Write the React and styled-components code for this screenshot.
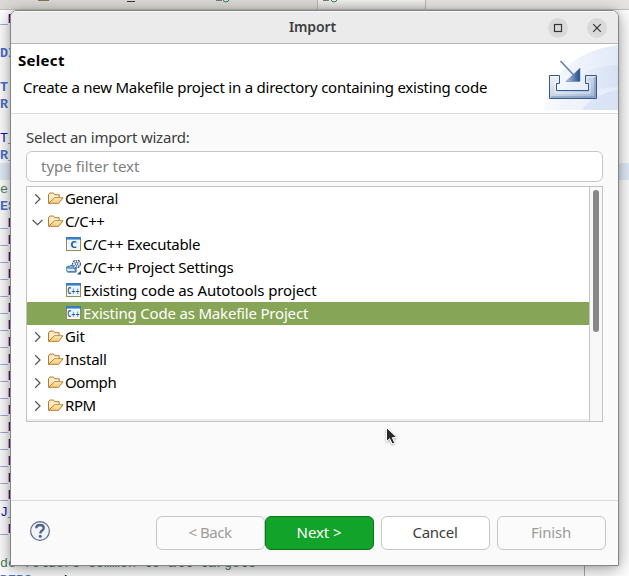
import React from 'react';
import styled, { createGlobalStyle } from 'styled-components';

const GlobalStyle = createGlobalStyle`
  * { box-sizing: border-box; }
  html, body { margin: 0; padding: 0; overflow: hidden; }
  body { font: 15px/20px "Noto Sans", sans-serif; color: #000; }
`;

const Desktop = styled.div`
  position: relative;
  width: 629px;
  height: 576px;
  overflow: hidden;
  background: #fff;
`;

const TabStrip = styled.div`
  display: flex;
  height: 10px;
  border-bottom: 1px solid #c4c1bd;
  background: #e6e5e3;
`;

const EditorTab = styled.div`
  display: flex;
  justify-content: flex-end;
  width: ${p => p.$width}px;
  padding-right: ${p => p.$inset}px;
  border-right: 1px solid #b9b6b2;
  background: ${p => (p.$active ? 'linear-gradient(#f1f1f0, #dddcdb)' : '#dcdad7')};
`;

const Code = styled.div`
  display: flex;
  flex-direction: column;
  font: 13.33px/19px "Liberation Mono", monospace;
`;

const codeColors = {
  name: '#4a70cf',
  target: '#1010b0',
  comment: '#3f7f5f',
};

const CodeLine = styled.div`
  flex: none;
  height: 17px;
  white-space: pre;
  color: ${p => codeColors[p.$kind] || '#5566d8'};
  font-weight: ${p => (p.$kind === 'name' ? 700 : 400)};
  background: ${p => (p.$current ? '#e3edfa' : 'transparent')};
`;

const Macro = styled.span`
  color: #3b1088;
  font-weight: 700;
`;

const Plain = styled.span`
  color: #000;
`;

const Margin = styled.div`
  position: absolute;
  left: 584px;
  top: 10px;
  bottom: 0;
  width: 1px;
  background: #a8a8ae;
`;

const Dialog = styled.section`
  position: absolute;
  left: 10px;
  top: 10px;
  width: 609px;
  height: 556px;
  display: flex;
  flex-direction: column;
  overflow: hidden;
  border: 1px solid #858585;
  border-radius: 7px 7px 0 0;
  background: #fafafa;
`;

const DialogShadow = styled.div`
  position: absolute;
  left: 10px;
  top: 10px;
  width: 609px;
  height: 556px;
  border-radius: 7px 7px 0 0;
  box-shadow: 0 3px 18px rgba(0, 0, 0, 0.4), 0 0 4px rgba(0, 0, 0, 0.1);
`;

const Label = styled.span`
  white-space: pre;
  letter-spacing: ${p => p.$track || 0}px;
`;

const TitleBar = styled.header`
  display: grid;
  grid-template-columns: 1fr auto 1fr;
  align-items: center;
  flex: none;
  height: 33px;
  border-top: 1px solid #f8f8f8;
  border-bottom: 1px solid #b6b6b6;
  background: #ebebeb;
`;

const WindowTitle = styled.h1`
  grid-column: 2;
  margin: 0;
  padding: 0 4px 2px 0;
  font-size: 14px;
  line-height: 20px;
  font-weight: 600;
  color: #3d3d3d;
  letter-spacing: -0.1px;
`;

const WindowButtons = styled.div`
  display: flex;
  justify-content: flex-end;
  gap: 19px;
  padding: 1px 11px 0 0;
`;

const RoundButton = styled.button`
  display: flex;
  align-items: center;
  justify-content: center;
  width: 20px;
  height: 20px;
  padding: 0;
  border: 0;
  border-radius: 50%;
  background: #dadada;
`;

const Banner = styled.div`
  display: flex;
  justify-content: space-between;
  flex: none;
  height: 70px;
  border-bottom: 1px solid #dedede;
  background: #fff;
`;

const BannerText = styled.div`
  display: flex;
  flex-direction: column;
  gap: 7px;
  padding: 6px 0 0 7px;
`;

const StepTitle = styled.strong`
  line-height: 20px;
  letter-spacing: 0.3px;
`;

const StepInfo = styled.div`
  padding-left: 5px;
`;

const Body = styled.main`
  display: flex;
  flex-direction: column;
  flex: 1;
  padding: 13px 15px 0;
`;

const FieldLabel = styled.label`
  color: #3d3d3d;
  height: 24px;
`;

const Filter = styled.div`
  display: flex;
  align-items: center;
  height: 31px;
  margin-bottom: 4px;
  padding: 0 0 2px 14px;
  border: 1px solid #c6c6c6;
  border-radius: 6px;
  background: #fff;
  color: #808080;
`;

const Tree = styled.div`
  display: flex;
  height: 236px;
  border: 1px solid #c3c3c3;
  background: #fff;
`;

const Rows = styled.div`
  flex: 1;
  border-bottom: 2px solid #eeeeee;
`;

const Row = styled.div`
  display: flex;
  align-items: center;
  height: 23px;
  padding-left: ${p => (p.$child ? 39 : 3)}px;
  color: ${p => (p.$selected ? '#fff' : '#000')};
  background: ${p => (p.$selected ? '#87a556' : 'transparent')};
`;

const RowLabel = styled(Label)`
  margin-left: 1px;
  padding-bottom: 2px;
`;

const ScrollTrack = styled.div`
  width: 13px;
  padding: 3px 0 0 3px;
  border-left: 1px solid #c6c6c6;
  background: #f8f8f8;
`;

const ScrollThumb = styled.div`
  width: 6px;
  height: 142px;
  border-radius: 3px;
  background: #888;
`;

const Footer = styled.footer`
  display: flex;
  align-items: flex-start;
  flex: none;
  height: 65px;
  padding: 15px 12px 0 18px;
  border-top: 1px solid #dadada;
`;

const HelpButton = styled.button`
  display: flex;
  margin: 4px auto 0 0;
  padding: 0;
  border: 0;
  background: none;
`;

const PushButton = styled.button`
  width: 109px;
  height: 34px;
  margin-left: ${p => p.$gap || 0}px;
  padding: 0 1px 2px 0;
  border: 1px solid ${p => (p.$primary ? '#0c751b' : '#c6c6c6')};
  border-radius: 6px;
  font: 15px/20px "Noto Sans", sans-serif;
  color: ${p => (p.$primary ? '#fff' : p.disabled ? '#9c9c9c' : '#3d3d3d')};
  background: ${p => (p.$primary ? '#12a32a' : p.disabled ? '#fbfbfb' : '#fff')};
`;

const Pointer = styled.svg`
  position: absolute;
  left: 384px;
  top: 425px;
  filter: drop-shadow(0 1px 1px rgba(0, 0, 0, 0.3));
`;

const Chevron = ({ open }) => (
  <svg width="18" height="18" viewBox="0 0 18 18" fill="none" stroke="#555" strokeWidth="1.25">
    <path d={open ? 'M2.6 7l4.9 4.6L12.4 7' : 'M5.2 4.3L10 9l-4.8 4.7'} />
  </svg>
);

const Folder = () => (
  <svg width="16" height="16" viewBox="0.5 0.5 16 16" strokeLinejoin="round">
    <path d="M1 12.5V4.2l1.4-1.7H6l1.3 1.7h4.4v3" fill="#fbe8bb" stroke="#b57a35" />
    <path d="M2.7 5.8h7.8" stroke="#fff6dc" />
    <path d="M1 12.8L5.6 8.7l1.3-1.4h8.6l-4.3 5.5z" fill="#fbd78b" stroke="#b57a35" />
    <path d="M6.8 8.4h6.9" stroke="#fff0c5" />
  </svg>
);

const SourceWindow = ({ text }) => (
  <svg width="16" height="16" viewBox="0 1 16 16">
    <rect x=".5" y="1.5" width="14" height="13" fill="#eaf7fe" stroke="#a08a52" />
    <rect x="0" y="1" width="15" height="3" fill="#3c7bc0" />
    <path d="M1 3.5h13" stroke="#80b5e6" />
    <text
      x="7.6"
      y="12"
      textAnchor="middle"
      fontFamily="DejaVu Sans, sans-serif"
      fontWeight="700"
      fontSize={text === 'C' ? 8.5 : 8}
      textLength={text === 'C' ? undefined : 12}
      lengthAdjust="spacingAndGlyphs"
      fill="#1d5685"
    >
      {text}
    </text>
  </svg>
);

const ProjectSettings = () => (
  <svg width="16" height="16" viewBox="0.5 1 16 16">
    <path d="M1 8.3l1-1h2l1-1h2l1 1.5h2.5V13H2V9z" fill="#8bb8e3" stroke="#2d659f" />
    <path d="M0 9.1h9l1.3 3.6H1.8z" fill="#d8ebfa" stroke="#3b74ad" />
    <circle cx="11" cy="4.9" r="3.9" fill="#e8eff7" stroke="#345b87" strokeWidth="1.2" strokeDasharray="2 .8" />
    <path d="M8 2.3l6 5M14 2.3L8 7.3M11 1.3v7" stroke="#58799f" strokeWidth=".8" />
    <circle cx="11" cy="4.9" r="1.3" fill="#fff" stroke="#345b87" strokeWidth=".8" />
    <path d="M15.5 11.5v4h-4z" fill="#204f85" />
  </svg>
);

const icons = {
  folder: <Folder />,
  c: <SourceWindow text="C" />,
  cpp: <SourceWindow text="C++" />,
  settings: <ProjectSettings />,
};

const ImportArt = () => (
  <svg width="74" height="67" viewBox="0 0 74 67">
    <defs>
      <linearGradient id="glow" x1="0" x2="1" y1="0" y2="0">
        <stop offset="0" stopColor="#f7f9fe" />
        <stop offset="1" stopColor="#dce5f6" />
      </linearGradient>
      <linearGradient id="sweep" x1="0" x2="1" y1="0" y2="0">
        <stop offset="0" stopColor="#f3f6fd" stopOpacity=".4" />
        <stop offset="1" stopColor="#c8d7f1" />
      </linearGradient>
      <linearGradient id="tray" x1="0" x2="1" y1="0" y2="1">
        <stop offset="0" stopColor="#f0f4fa" />
        <stop offset="1" stopColor="#9fb4d4" />
      </linearGradient>
      <linearGradient id="head" x1="0" x2="1" y1="0" y2="0">
        <stop offset="0" stopColor="#b5c7e0" />
        <stop offset="1" stopColor="#224a8a" />
      </linearGradient>
    </defs>
    <path d="M0 66C5 35 27 7 74 1v65z" fill="url(#glow)" opacity=".8" />
    <path d="M15 50C28 32 48 22 74 21v22C50 44 31 52 20 66H8z" fill="url(#sweep)" opacity=".5" />
    <path d="M38 66c6-9 18-17 36-20v20z" fill="#cddaf3" opacity=".5" />
    <g transform="translate(-1 0)">
      <path d="M6.5 31.5h10v8h-3v7h32v-7h-3v-8h11v23h-47z" fill="url(#tray)" stroke="#38598f" />
      <path d="M8 33h7v5h-3v11h35V38h-3v-5h8" fill="none" stroke="#fff" strokeOpacity=".6" />
      <path d="M8 53h44V33" fill="none" stroke="#6e8bb8" />
      <path d="M17.5 17l15 16" stroke="#5e81b2" strokeWidth="1.7" />
      <path d="M37 24v13.5H23z" fill="url(#head)" stroke="#6685b3" strokeWidth=".6" />
    </g>
  </svg>
);

const tree = [
  { label: 'General', icon: 'folder', track: -0.33 },
  { label: 'C/C++', icon: 'folder', track: -0.45, open: true },
  { label: 'C/C++ Executable', icon: 'c', track: -0.3, child: true },
  { label: 'C/C++ Project Settings', icon: 'settings', track: -0.23, child: true },
  { label: 'Existing code as Autotools project', icon: 'cpp', track: -0.115, child: true },
  { label: 'Existing Code as Makefile Project', icon: 'cpp', track: -0.19, child: true, selected: true },
  { label: 'Git', icon: 'folder', track: -0.2 },
  { label: 'Install', icon: 'folder', track: -0.2 },
  { label: 'Oomph', icon: 'folder', track: -0.4 },
  { label: 'RPM', icon: 'folder', track: -0.4 },
];

const macro = { kind: 'macro', text: '_' };
const blank = { text: ' ' };
const source = [
  macro, blank,
  { kind: 'name', text: 'DIR' }, blank,
  { kind: 'name', text: 'T' },
  { kind: 'name', text: 'R' }, blank,
  { kind: 'target', text: 'T_' },
  { kind: 'name', text: 'R_' },
  { text: ' ', current: true },
  { kind: 'comment', text: 'e' },
  { kind: 'name', text: 'ES' },
  ...Array(17).fill(macro),
  { kind: 'target', text: 'J_' },
  macro, blank,
  { kind: 'comment', text: 'de folders common to all targets' },
  { kind: 'name', text: 'DERS += ', tail: '\\' },
];

export default function App() {
  return (
    <Desktop>
      <GlobalStyle />
      <TabStrip>
        <EditorTab $width={318} $inset={86}>
          <svg width="231" height="9" fill="none">
            <path d="M38 0h11" stroke="#847548" strokeWidth="2" />
            <path d="M127 1.5h8" stroke="#333" />
            <path d="M216 0h6" stroke="#777" strokeWidth="2" />
            <circle cx="226" cy="-1" r="3" stroke="#358564" />
          </svg>
        </EditorTab>
        <EditorTab $width={108} $inset={84} $active>
          <svg width="20" height="9" fill="none">
            <path d="M2 0h6" stroke="#777" strokeWidth="2" />
            <circle cx="13" cy="-1" r="3" stroke="#358564" />
          </svg>
        </EditorTab>
      </TabStrip>
      <Code>
        {source.map((line, i) => (
          <CodeLine key={i} $kind={line.kind} $current={line.current}>
            {line.text}
            {line.kind === 'macro' && <Macro>M</Macro>}
            {line.tail && <Plain>{line.tail}</Plain>}
          </CodeLine>
        ))}
      </Code>
      <Margin />
      <DialogShadow />
      <Dialog>
        <TitleBar>
          <WindowTitle>Import</WindowTitle>
          <WindowButtons>
            <RoundButton aria-label="Maximize">
              <svg width="20" height="20" fill="none" stroke="#333" strokeWidth="1.2">
                <rect x="6.5" y="6.5" width="7" height="7" />
              </svg>
            </RoundButton>
            <RoundButton aria-label="Close">
              <svg width="20" height="20" fill="none" stroke="#333" strokeWidth="1.2">
                <path d="M6.2 6.2l7.6 7.6M13.8 6.2l-7.6 7.6" />
              </svg>
            </RoundButton>
          </WindowButtons>
        </TitleBar>
        <Banner>
          <BannerText>
            <StepTitle>Select</StepTitle>
            <StepInfo>
              <Label $track={-0.23}>Create a new Makefile project in a directory containing existing code</Label>
            </StepInfo>
          </BannerText>
          <ImportArt />
        </Banner>
        <Body>
          <FieldLabel>
            <Label $track={-0.23}>Select an import wizard:</Label>
          </FieldLabel>
          <Filter>
            <Label>type filter text</Label>
          </Filter>
          <Tree>
            <Rows>
              {tree.map(item => (
                <Row key={item.label} $child={item.child} $selected={item.selected}>
                  {!item.child && <Chevron open={item.open} />}
                  {icons[item.icon]}
                  <RowLabel $track={item.track}>{item.label}</RowLabel>
                </Row>
              ))}
            </Rows>
            <ScrollTrack>
              <ScrollThumb />
            </ScrollTrack>
          </Tree>
        </Body>
        <Footer>
          <HelpButton aria-label="Help">
            <svg width="22" height="22" viewBox="0 0 22 22">
              <circle cx="11" cy="11" r="9.4" fill="#f1f3f6" stroke="#5a6d8c" strokeWidth="1.2" />
              <path d="M7.3 8.2c0-2.2 1.6-3.2 3.7-3.2s3.8 1 3.8 3c0 2.6-3.5 2.5-3.5 5.4" fill="none" stroke="#4f6488" strokeWidth="2.3" />
              <circle cx="11.2" cy="16.3" r="1.5" fill="#4f6488" />
            </svg>
          </HelpButton>
          <PushButton disabled><Label $track={-0.45}>{'< Back'}</Label></PushButton>
          <PushButton $primary><Label $track={-0.1}>{'Next >'}</Label></PushButton>
          <PushButton $gap={7}><Label $track={-0.28}>Cancel</Label></PushButton>
          <PushButton $gap={7} disabled><Label $track={-0.2}>Finish</Label></PushButton>
        </Footer>
      </Dialog>
      <Pointer width="18" height="24" viewBox="0 0 18 24">
        <path d="M2.5 2.5v14l3.2-2.8 2.5 5.3 2.6-1.2-2.5-5.1 4.4-.4z" fill="#2a2a2a" stroke="#fff" strokeWidth="1" />
      </Pointer>
    </Desktop>
  );
}
